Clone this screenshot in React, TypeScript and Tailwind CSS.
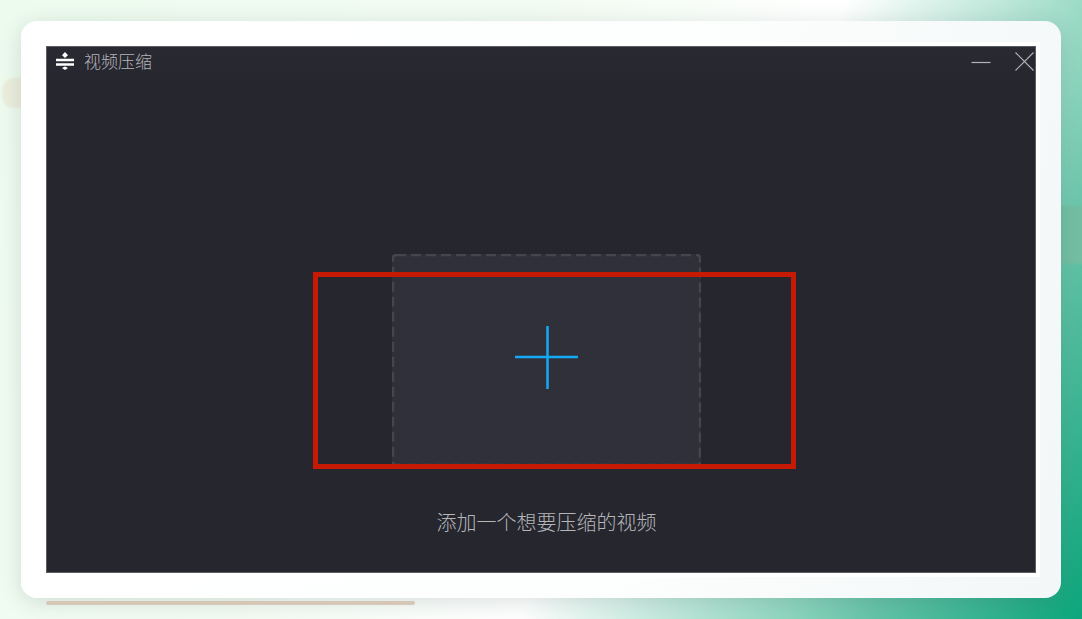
const FONT = 'font-["Noto_Sans_CJK_SC","Noto_Sans",sans-serif]';

function CompressIcon() {
  return (
    <svg width="18" height="18" viewBox="0 0 18 18" className="shrink-0">
      <path d="M0 8H18M0 12.5H18" stroke="#fff" strokeWidth="2.4" />
      <path d="M9 0L12 3.2L9 6L6 3.2Z" fill="#fff" />
      <path d="M9 14.5L12 16L9 18L6 16Z" fill="#fff" />
    </svg>
  );
}

function WindowButtons() {
  return (
    <div className="ml-auto flex items-center gap-[24px] pr-[1px]">
      <svg width="20" height="18" viewBox="0 0 20 18">
        <path d="M0.5 9.5H19.5" stroke="#b4b4b8" strokeWidth="1.2" />
      </svg>
      <svg width="19" height="19" viewBox="0 0 19 19">
        <path d="M0.5 0.5L18.5 18.5M18.5 0.5L0.5 18.5" stroke="#b4b4b8" strokeWidth="1.1" />
      </svg>
    </div>
  );
}

function PlusIcon() {
  return (
    <svg width="64" height="64" viewBox="0 0 64 64">
      <path d="M0 31H63M32.5 0V63" stroke="#14a9f5" strokeWidth="2.5" />
    </svg>
  );
}

export default function App() {
  return (
    <div className={`relative h-[619px] w-[1082px] overflow-hidden p-[21px] ${FONT} bg-[linear-gradient(118deg,#edfbee_0%,#f3fcf3_40%,#ffffff_60%,#8fd6bf_79%,#66c4a8_85%,#0ca67c_100%)]`}>
      {/* things peeking out behind the card */}
      <div className="absolute left-[2px] top-[78px] h-[30px] w-[40px] rounded-[12px] bg-[#ebeedd] blur-[1px]" />
      <div className="absolute left-[1050px] top-[206px] h-[58px] w-[60px] rounded-[10px] bg-[#74bfa4] blur-[1px]" />
      <div className="absolute left-[46px] top-[601px] h-[4px] w-[369px] rounded-[2px] bg-[#e4d2bf]" />

      <div className="relative flex h-[577px] w-[1040px] rounded-[16px] bg-[linear-gradient(100deg,#ffffff_0%,#fdfefe_60%,#f3f7f7_100%)] p-[25px] shadow-[0_4px_22px_rgba(40,60,70,0.16)]">
        <div className="relative flex w-full flex-col border border-[#5c5c64] bg-[#25262e] shadow-[0_0_0_4px_#ffffff]">
          <div className="flex h-[34px] shrink-0 items-start bg-[linear-gradient(180deg,#2a2a33,#26262e)] pl-[9px] pt-[5px]">
            <CompressIcon />
            <span className="ml-[10px] -mt-px text-[17px] leading-[20px] font-light text-[#b6b6ba]">视频压缩</span>
            <WindowButtons />
          </div>

          <div className="flex flex-col items-center pl-[11px] pt-[173px]">
            <div className="relative flex h-[212px] w-[309px] items-center justify-center rounded-[3px] bg-[#30303b] pb-[4px]">
              <svg className="absolute inset-0 h-full w-full" fill="none">
                <rect x="1" y="1" width="307" height="210" rx="3" stroke="#454550" strokeWidth="2.5" strokeDasharray="10 5" />
              </svg>
              <PlusIcon />
            </div>
            <p className="mt-[42px] text-[20px] leading-[28px] font-light text-[#b6b6ba]">添加一个想要压缩的视频</p>
          </div>

          {/* red annotation drawn over the screenshot */}
          <div className="absolute left-[266px] top-[225px] h-[197px] w-[483px] border-[5px] border-[#c61a04]" />
        </div>
      </div>
    </div>
  );
}
